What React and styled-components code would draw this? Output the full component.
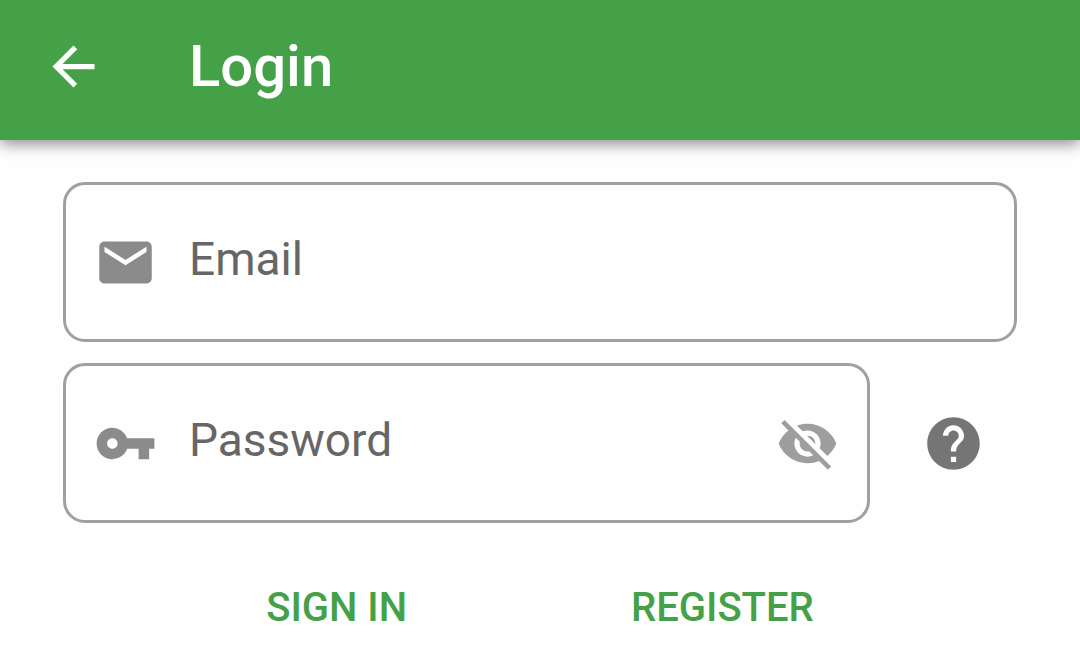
import React, { useState } from 'react';
import styled, { createGlobalStyle } from 'styled-components';
import { MdArrowBack, MdEmail, MdVpnKey, MdVisibilityOff, MdVisibility, MdHelp } from 'react-icons/md';

const ICON_SIZE = 63;

const GlobalStyle = createGlobalStyle`
  * { box-sizing: border-box; }
  body {
    margin: 0;
    background: #fefefe;
    font-family: Roboto, "Liberation Sans", sans-serif;
  }
  button { font-family: inherit; }
`;

const AppBar = styled.header`
  display: flex;
  align-items: center;
  gap: 84px;
  height: 140px;
  padding: 0 42px 8px;
  background: #45a147;
  color: #fff;
  box-shadow: 0 4px 14px rgba(0, 0, 0, 0.45);
`;

const IconButton = styled.button`
  display: flex;
  flex: none;
  padding: 0;
  border: 0;
  background: none;
  color: ${({ $color }) => $color || 'inherit'};
  cursor: pointer;
`;

const Title = styled.h1`
  margin: 0;
  font-size: 58px;
  line-height: 64px;
  font-weight: 500;
`;

const Form = styled.form`
  display: flex;
  flex-direction: column;
  gap: 21px;
  padding: 42px 63px 0;
`;

const Row = styled.div`
  display: flex;
  align-items: center;
  gap: 52px;
  padding-right: ${({ $inset }) => ($inset ? '32px' : '0')};
`;

const Field = styled.label`
  display: flex;
  flex: 1;
  min-width: 0;
  align-items: center;
  gap: 32px;
  height: 160px;
  padding: 0 28px;
  border: 3px solid #a0a0a0;
  border-radius: 22px;
  color: #8b8b8b;
  svg { flex: none; }
`;

const Input = styled.input`
  flex: 1;
  min-width: 0;
  height: 64px;
  padding: 0 0 6px;
  border: 0;
  outline: 0;
  background: transparent;
  color: #212121;
  font-family: inherit;
  font-size: 46px;
  &::placeholder { color: #666; opacity: 1; }
`;

const Actions = styled.div`
  display: flex;
  justify-content: center;
  gap: 224px;
  padding-top: 32px;
`;

const TextButton = styled.button`
  padding: 0;
  border: 0;
  background: none;
  color: #45a147;
  font-size: 40px;
  line-height: 64px;
  font-weight: 500;
  text-transform: uppercase;
  cursor: pointer;
`;

export default function App() {
  const [visible, setVisible] = useState(false);
  const Eye = visible ? MdVisibility : MdVisibilityOff;
  return (
    <>
      <GlobalStyle />
      <AppBar>
        <IconButton type="button" aria-label="Back"><MdArrowBack size={ICON_SIZE} /></IconButton>
        <Title>Login</Title>
      </AppBar>
      <Form onSubmit={(e) => e.preventDefault()}>
        <Row>
          <Field>
            <MdEmail size={ICON_SIZE} />
            <Input type="email" placeholder="Email" aria-label="Email" />
          </Field>
        </Row>
        <Row $inset>
          <Field>
            <MdVpnKey size={ICON_SIZE} />
            <Input type={visible ? 'text' : 'password'} placeholder="Password" aria-label="Password" />
            <IconButton type="button" $color="#9e9e9e" aria-label="Toggle password" onClick={() => setVisible(!visible)}>
              <Eye size={ICON_SIZE} />
            </IconButton>
          </Field>
          <IconButton type="button" $color="#757575" aria-label="Help"><MdHelp size={ICON_SIZE} /></IconButton>
        </Row>
        <Actions>
          <TextButton type="submit">Sign in</TextButton>
          <TextButton type="button">Register</TextButton>
        </Actions>
      </Form>
    </>
  );
}
